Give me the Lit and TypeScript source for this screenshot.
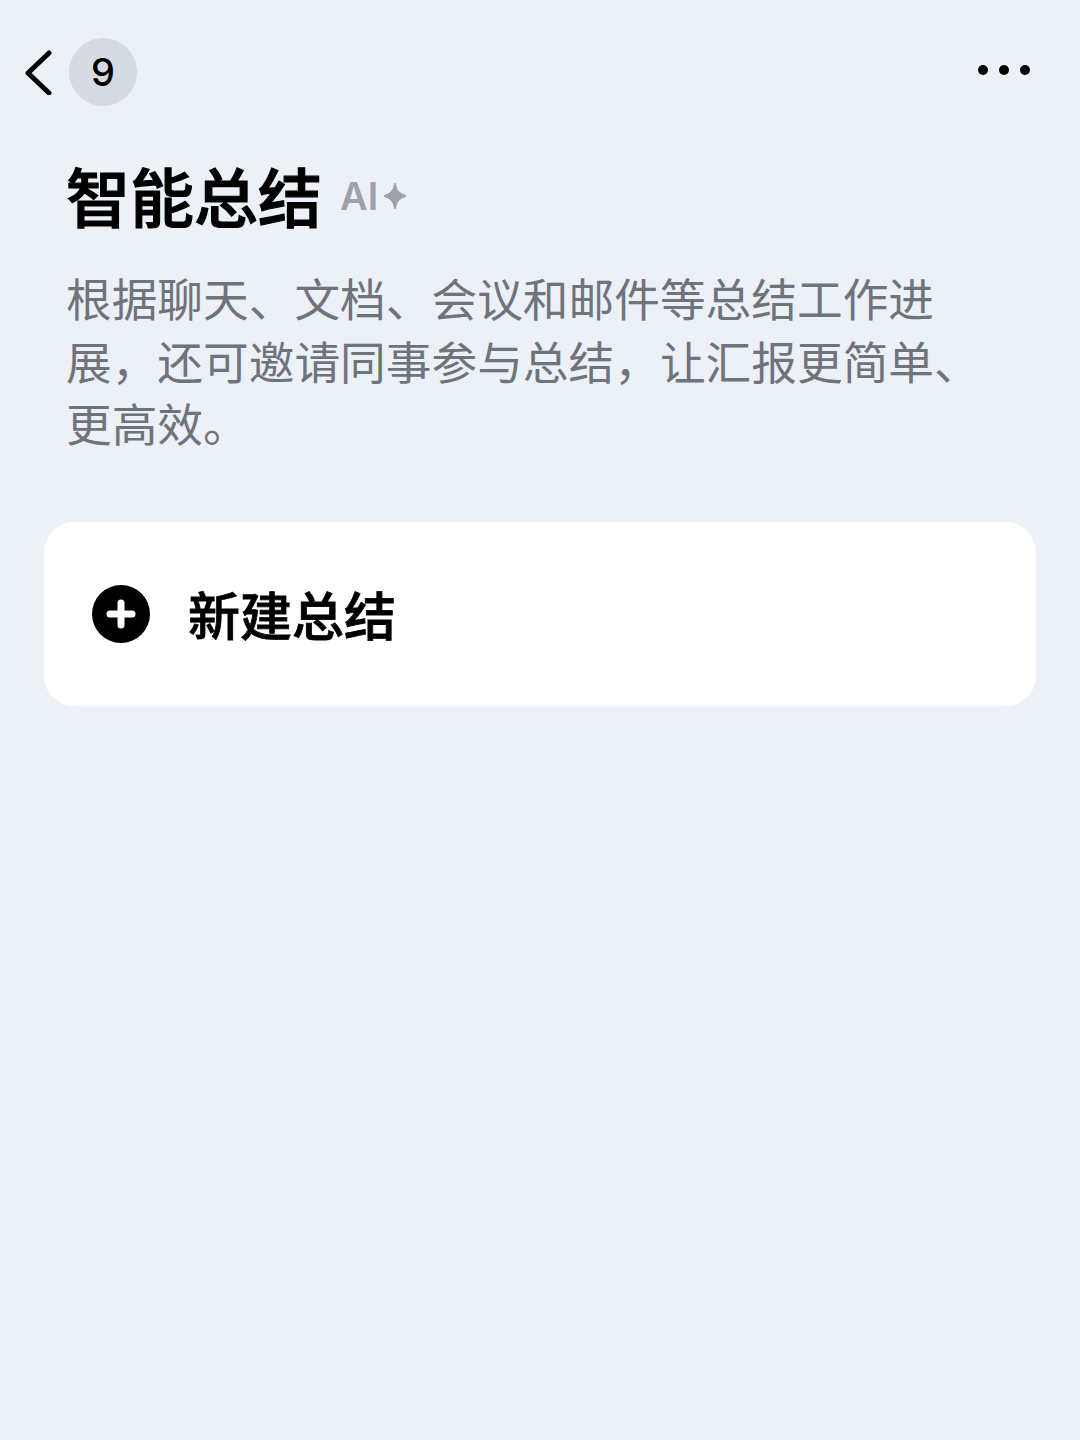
import { LitElement, html, css } from 'lit';
import { customElement } from 'lit/decorators.js';

@customElement('app-root')
export class AppRoot extends LitElement {
  static styles = css`
    :host {
      display: block;
      width: 1080px;
      height: 1440px;
      overflow: hidden;
      background: #ecf0f7;
      font-family: 'Liberation Sans', 'Noto Sans CJK SC', sans-serif;
      color: #000;
    }
    .topbar {
      display: flex;
      align-items: center;
      justify-content: space-between;
      height: 68px;
      padding: 38px 50px 0 24px;
    }
    .left {
      display: flex;
      align-items: center;
      gap: 15px;
    }
    .back {
      display: block;
      width: 30px;
      height: 46px;
    }
    .badge {
      display: flex;
      align-items: center;
      justify-content: center;
      width: 68px;
      height: 68px;
      border-radius: 50%;
      background: #d6dae2;
      font-family: 'Inter', sans-serif;
      font-size: 38px;
      font-weight: 500;
      line-height: 1;
    }
    .dots {
      display: flex;
      gap: 11px;
      margin-top: -4px;
    }
    .dots span {
      width: 10px;
      height: 10px;
      border-radius: 50%;
      background: #000;
    }
    .intro {
      padding: 50px 44px 0 66px;
    }
    .title-row {
      display: flex;
      align-items: center;
      height: 76px;
    }
    h1 {
      margin: 0;
      font-family: 'Noto Sans CJK SC', sans-serif;
      font-size: 64px;
      line-height: 76px;
      font-weight: 500;
      -webkit-text-stroke: 1.2px #000;
    }
    .ai {
      display: flex;
      align-items: center;
      gap: 6px;
      margin: 4px 0 0 18px;
      color: #9da1a8;
      font-family: 'Inter', sans-serif;
      font-size: 38px;
      font-weight: 600;
      line-height: 1;
    }
    .ai svg {
      width: 22px;
      height: 26px;
    }
    p {
      margin: 34px 0 0;
      width: 930px;
      font-family: 'Noto Sans CJK SC', sans-serif;
      font-size: 45.7px;
      line-height: 62.5px;
      color: #6f737b;
    }
    .card {
      display: flex;
      align-items: center;
      gap: 38px;
      height: 184px;
      margin: 68px 44px 0;
      padding-left: 48px;
      box-sizing: border-box;
      border-radius: 30px;
      background: #fff;
    }
    .plus {
      display: block;
      width: 58px;
      height: 58px;
    }
    .card span {
      font-family: 'Noto Sans CJK SC', sans-serif;
      font-size: 52px;
      font-weight: 500;
      line-height: 1;
      -webkit-text-stroke: 0.8px #000;
    }
  `;

  render() {
    return html`
      <div class="topbar" lang="zh-CN">
        <div class="left">
          <svg class="back" viewBox="0 0 30 46" fill="none">
            <path d="M25 4 L4 24 L25 44" stroke="#000" stroke-width="5" stroke-linecap="round" stroke-linejoin="round" />
          </svg>
          <div class="badge">9</div>
        </div>
        <div class="dots"><span></span><span></span><span></span></div>
      </div>
      <div class="intro" lang="zh-CN">
        <div class="title-row">
          <h1>智能总结</h1>
          <div class="ai">
            AI
            <svg viewBox="0 0 22 26"><path d="M11 0 C12 8 15 11 22 13 C15 15 12 18 11 26 C10 18 7 15 0 13 C7 11 10 8 11 0 Z" fill="#9da1a8" stroke="#9da1a8" stroke-width="1.5" /></svg>
          </div>
        </div>
        <p>根据聊天、文档、会议和邮件等总结工作进展，还可邀请同事参与总结，让汇报更简单、更高效。</p>
      </div>
      <div class="card" lang="zh-CN">
        <svg class="plus" viewBox="0 0 58 58">
          <circle cx="29" cy="29" r="29" fill="#000" />
          <path d="M18 29 H40 M29 18 V40" stroke="#fff" stroke-width="7" stroke-linecap="round" />
        </svg>
        <span>新建总结</span>
      </div>
    `;
  }
}
